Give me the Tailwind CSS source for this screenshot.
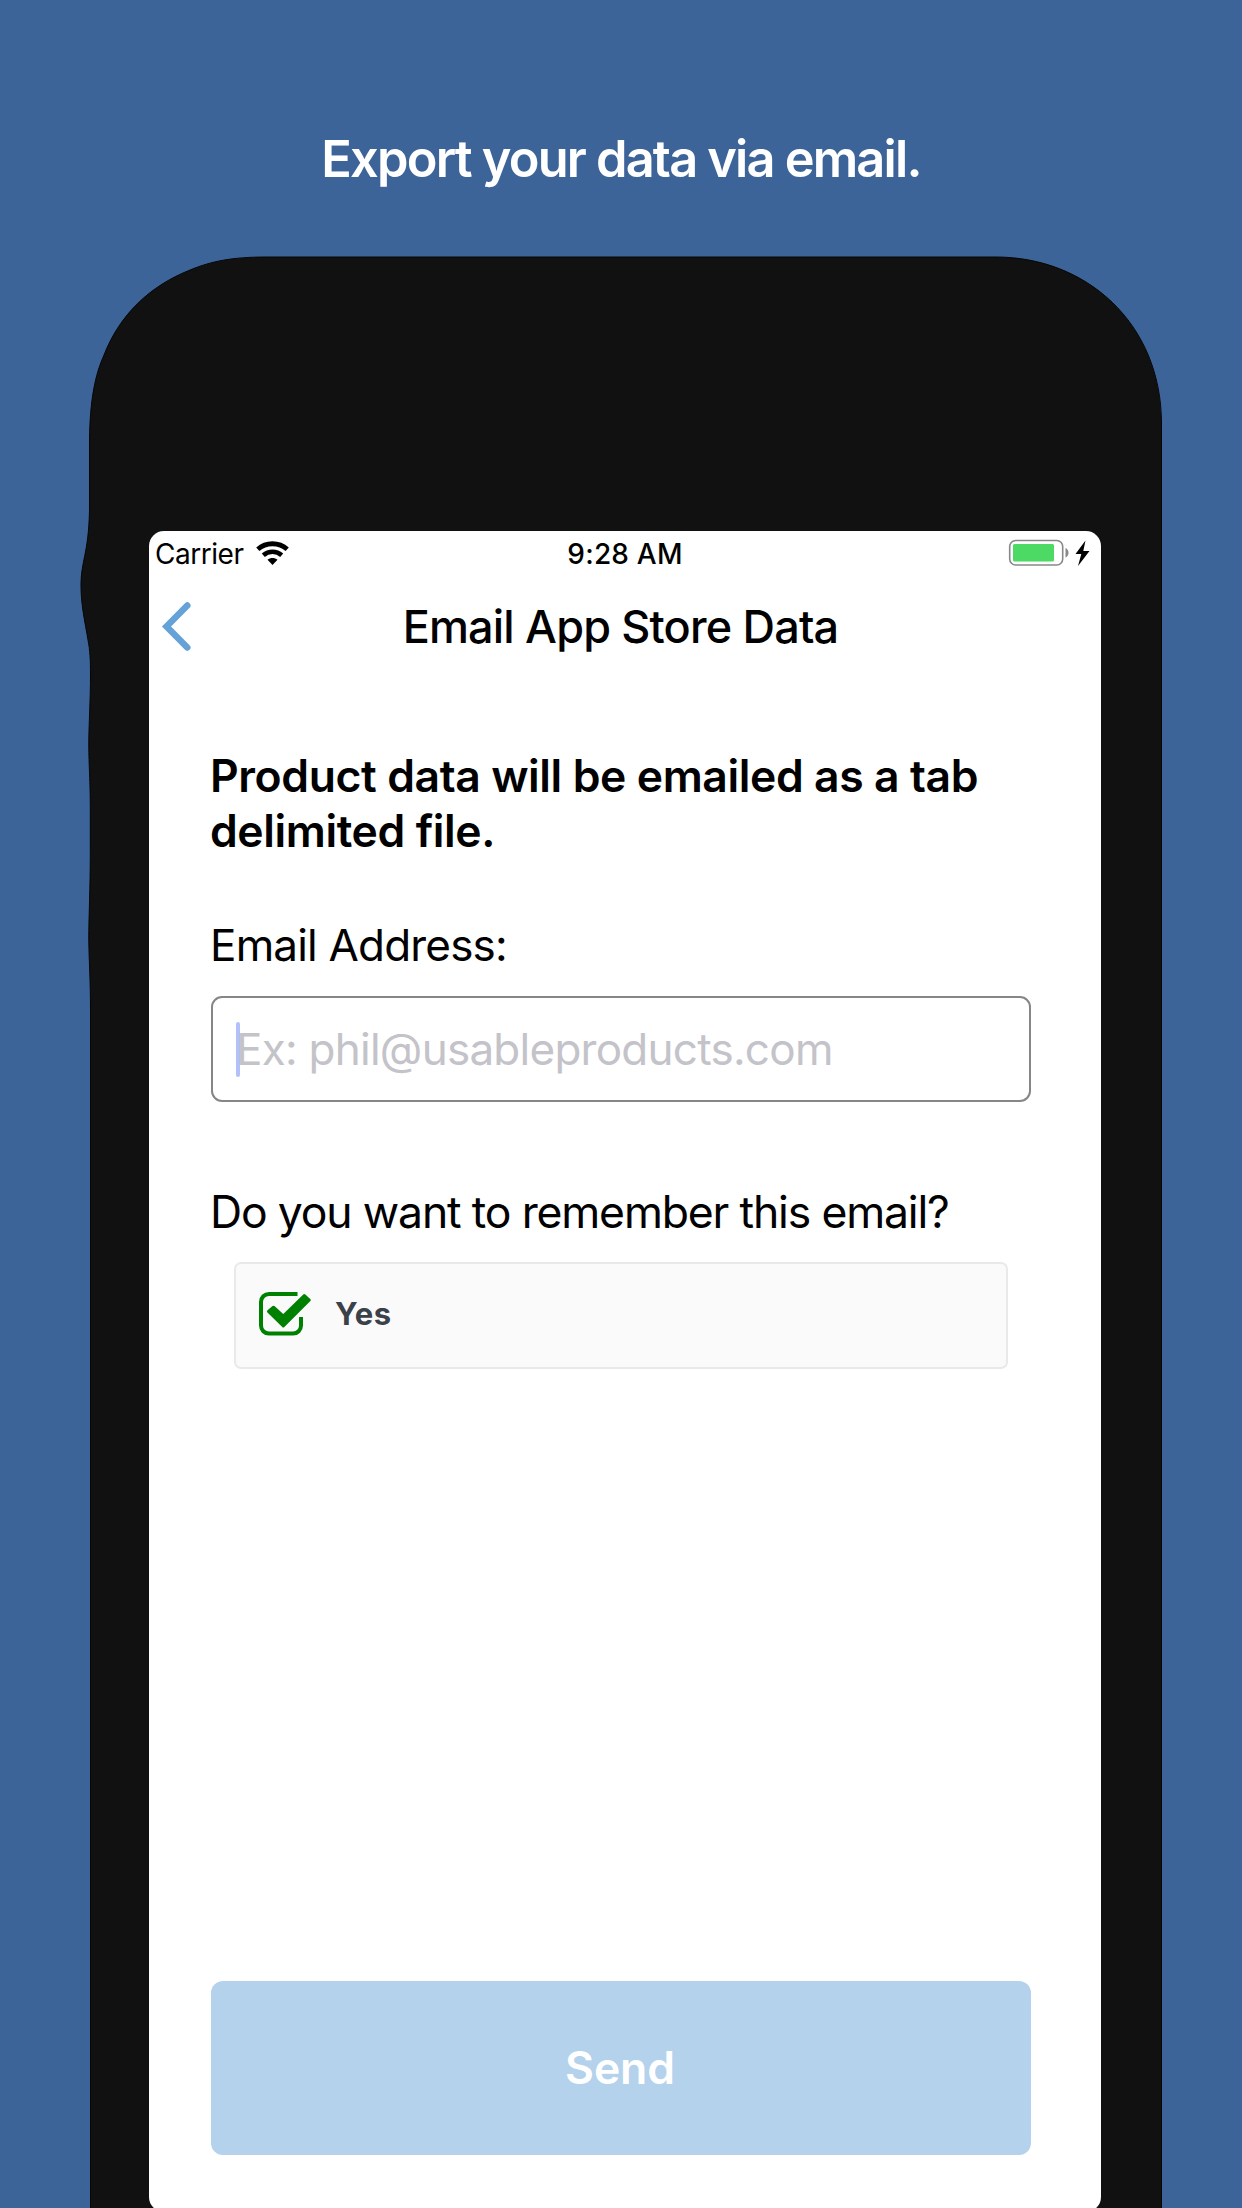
<!DOCTYPE html>
<html lang="en">
<head>
<meta charset="utf-8">
<title>Email App Store Data</title>
<script src="https://cdn.jsdelivr.net/npm/@tailwindcss/browser@4"></script>
</head>
<body class="bg-[#3c6498] font-['Inter',sans-serif] text-black">
<main class="relative isolate flex h-[2208px] w-[1242px] flex-col overflow-hidden bg-[#3c6498] pt-[129px]">

  <!-- Phone body with the button bulges on its left edge -->
  <svg class="absolute inset-0 -z-10" width="1242" height="2208" viewBox="0 0 1242 2208" fill="#111" stroke="#060606" aria-hidden="true">
    <path d="M90.500 2220V1010C90.500 980 89 960 88.800 940C88.800 915 90.300 890 90.300 850V810C90.300 780 88.800 765 88.800 745C88.800 725 90.500 700 90.500 675C90.500 660 90 650 88 640C85 622 81 605 81 586C81 560 88.500 555 89.500 510V440C90 400 95 375 104 355C120 314 150 286 190 270C212 261 232 257 267 257H996C1085 257 1161.500 322 1161.500 424V2220Z"/>
  </svg>

  <h1 class="h-[60px] text-center text-[50.500px] leading-[60px] font-semibold tracking-[-1.8px] text-white">Export your data via email.</h1>

  <section class="mt-[342px] ml-[149px] flex h-[1681px] w-[952px] shrink-0 flex-col rounded-[15px] bg-white">
    <div class="grid h-[45px] grid-cols-[1fr_auto_1fr] items-end text-[28px] leading-[44px]">
      <div class="flex items-center gap-3 pl-1.5">
        <span class="tracking-[-0.46px]">Carrier</span>
        <svg class="mb-0.5" width="33" height="24" viewBox="0 0 33 24" fill="none" aria-label="Wi-Fi">
          <path d="M1.800 8.200C10 .900 23 .900 31.200 8.200" stroke="#000" stroke-width="4.800"/>
          <path d="M7.300 14.200C12.600 9.600 20.400 9.600 25.700 14.200" stroke="#000" stroke-width="4.600"/>
          <path d="M11.500 18.700C14.400 16.300 18.600 16.300 21.500 18.700L16.500 24Z" fill="#000"/>
        </svg>
      </div>
      <span class="font-medium tracking-[0.2px]">9:28 AM</span>
      <div class="flex h-11 items-center justify-end pr-[11px]">
        <svg class="mb-0.5" width="82" height="28" viewBox="0 0 82 28" aria-label="Battery charging">
          <rect x="1.700" y="1.500" width="53" height="24.500" rx="6" fill="#fff" stroke="#888" stroke-width="1.600"/>
          <rect x="5" y="5" width="41" height="17.500" rx="1.500" fill="#4cd964"/>
          <path d="M57.500 9C61.500 10.500 61.500 17 57.500 18.500Z" fill="#888"/>
          <path d="M77.500 1.500L67.500 15H73.300L70 27L81.500 12H75.300Z" fill="#000"/>
        </svg>
      </div>
    </div>

    <header class="flex h-[102px] items-center">
      <svg class="mb-0.5 ml-3" width="30" height="50" viewBox="0 0 30 50" fill="none" aria-label="Back">
        <path d="M26.300 4.500L5.500 25.500L26.300 46.500" stroke="#65a2d8" stroke-width="6.500" stroke-linecap="round"/>
      </svg>
      <h2 class="flex-1 pr-[51px] text-center text-[45px] leading-[60px] font-medium tracking-[-0.82px]">Email App Store Data</h2>
    </header>

    <form class="flex flex-col pr-[70px] pl-[62px] text-[44px]">
      <p class="mt-[71px] -ml-px text-[44.500px] leading-[55px] font-semibold tracking-[-0.4px]">Product data will be emailed as a tab<br>delimited file.</p>
      <label class="mt-[59px] -ml-px h-[54px] leading-[54px] tracking-[-0.81px]">Email Address:</label>
      <div class="mt-6 flex h-[106px] items-center rounded-[11px] border-2 border-[#868686] pl-[23px] leading-[54px] tracking-[-0.74px] text-[#c3c3c9]">
        <span class="h-[55px] w-1 rounded-full bg-[#b3c1fa]"></span>
        <span class="-ml-1">Ex: phil@usableproducts.com</span>
      </div>
      <p class="mt-[83px] -ml-px h-[54px] text-[44.500px] leading-[54px] tracking-[-1.16px]">Do you want to remember this email?</p>
      <div class="mt-[23px] mr-[23px] ml-[23px] flex h-[107px] items-center rounded-[7px] border-2 border-[#e9e9e9] bg-[#fafafa] pb-[3px] pl-[22px]">
        <svg class="mb-0.5" width="54" height="46" viewBox="0 0 54 46" fill="none" stroke="#008000" aria-label="Checked">
          <path d="M39.500 3.900H11C6.500 3.900 3 7.500 3 11.900V35.500C3 40 6.500 43.600 11 43.600H35C39.500 43.600 43 40 43 35.500V27" stroke-width="4"/>
          <path d="M10.500 21.500L15.500 17.200L25.300 26L46.300 5.500L51.300 10L25.300 36Z" fill="#008000" stroke-width="3" stroke-linejoin="round"/>
        </svg>
        <span class="ml-[23px] text-[31px] leading-[44px] font-bold tracking-[0.5px] text-[#3b4148]">Yes</span>
      </div>
      <button type="button" class="mt-[612px] h-[174px] rounded-xl bg-[#b4d2eb] pt-px pr-0.5 text-[44.500px] font-semibold tracking-[-0.1px] text-white">Send</button>
    </form>
  </section>
</main>
</body>
</html>
